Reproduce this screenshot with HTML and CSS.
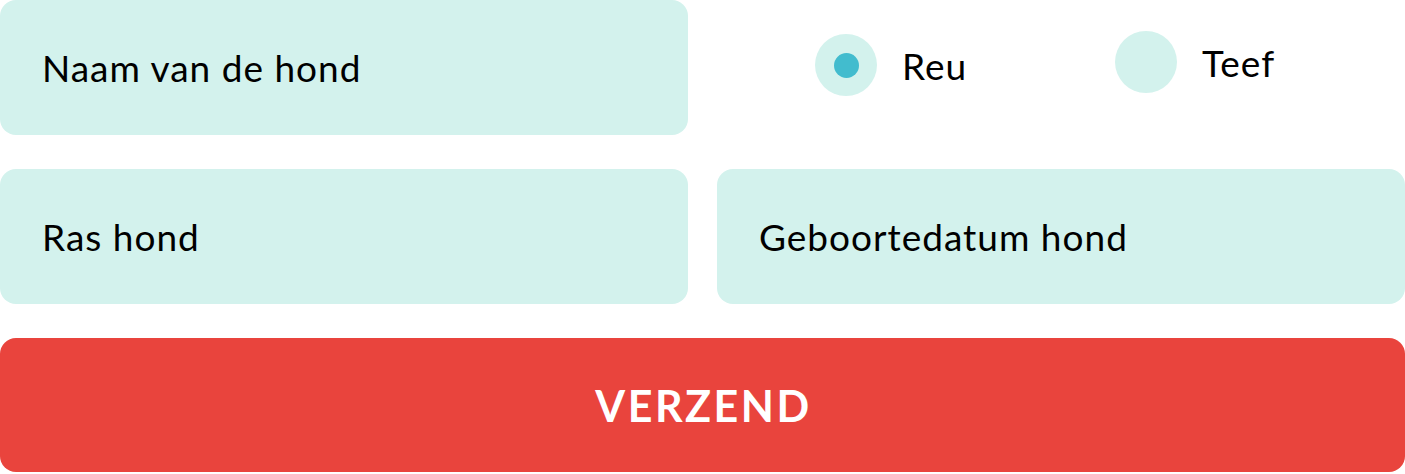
FILE: index.html
```html
<!DOCTYPE html>
<html lang="nl">
<head>
<meta charset="utf-8">
<title>Hond formulier</title>
<link rel="stylesheet" href="styles.css">
</head>
<body>
<form class="form">
  <div class="row">
    <div class="field"><span class="placeholder">Naam van de hond</span></div>
    <div class="radios">
      <label class="radio radio-reu"><span class="circle checked"><span class="dot"></span></span><span class="radio-label">Reu</span></label>
      <label class="radio radio-teef"><span class="circle"></span><span class="radio-label">Teef</span></label>
    </div>
  </div>
  <div class="row">
    <div class="field"><span class="placeholder">Ras hond</span></div>
    <div class="field"><span class="placeholder">Geboortedatum hond</span></div>
  </div>
  <button type="button" class="submit">VERZEND</button>
</form>
</body>
</html>
```
FILE: styles.css
```css
html, body {
  margin: 0;
  padding: 0;
  background: #ffffff;
}
body {
  width: 1405px;
  height: 474px;
  font-family: "Lato", "Liberation Sans", sans-serif;
  color: #000;
}
.form {
  display: flex;
  flex-direction: column;
  gap: 34px;
}
.row {
  display: grid;
  grid-template-columns: 688px 688px;
  column-gap: 29px;
  height: 135px;
}
.field {
  background: #d3f2ed;
  border-radius: 16px;
  display: flex;
  align-items: center;
  padding-left: 42px;
}
.placeholder {
  font-size: 37px;
  line-height: 1;
  letter-spacing: 1px;
}
.radios {
  display: flex;
  align-items: flex-start;
  padding-left: 98px;
  gap: 150px;
}
.radio {
  display: flex;
  align-items: center;
  gap: 25px;
  width: 150px;
}
.radio-reu { margin-top: 34px; }
.radio-teef { margin-top: 31px; }
.circle {
  width: 62px;
  height: 62px;
  border-radius: 50%;
  background: #d3f2ed;
  display: flex;
  align-items: center;
  justify-content: center;
  flex-shrink: 0;
}
.dot {
  width: 25px;
  height: 25px;
  border-radius: 50%;
  background: #42bcce;
}
.radio-label {
  font-size: 37px;
  line-height: 1;
  letter-spacing: 1px;
}
.submit {
  height: 134px;
  width: 1405px;
  border: none;
  border-radius: 16px;
  background: #e9443d;
  color: #ffffff;
  font-family: "Lato", "Liberation Sans", sans-serif;
  font-weight: 700;
  font-size: 43px;
  letter-spacing: 2.5px;
  padding: 0 0 0 2px;
}
```
